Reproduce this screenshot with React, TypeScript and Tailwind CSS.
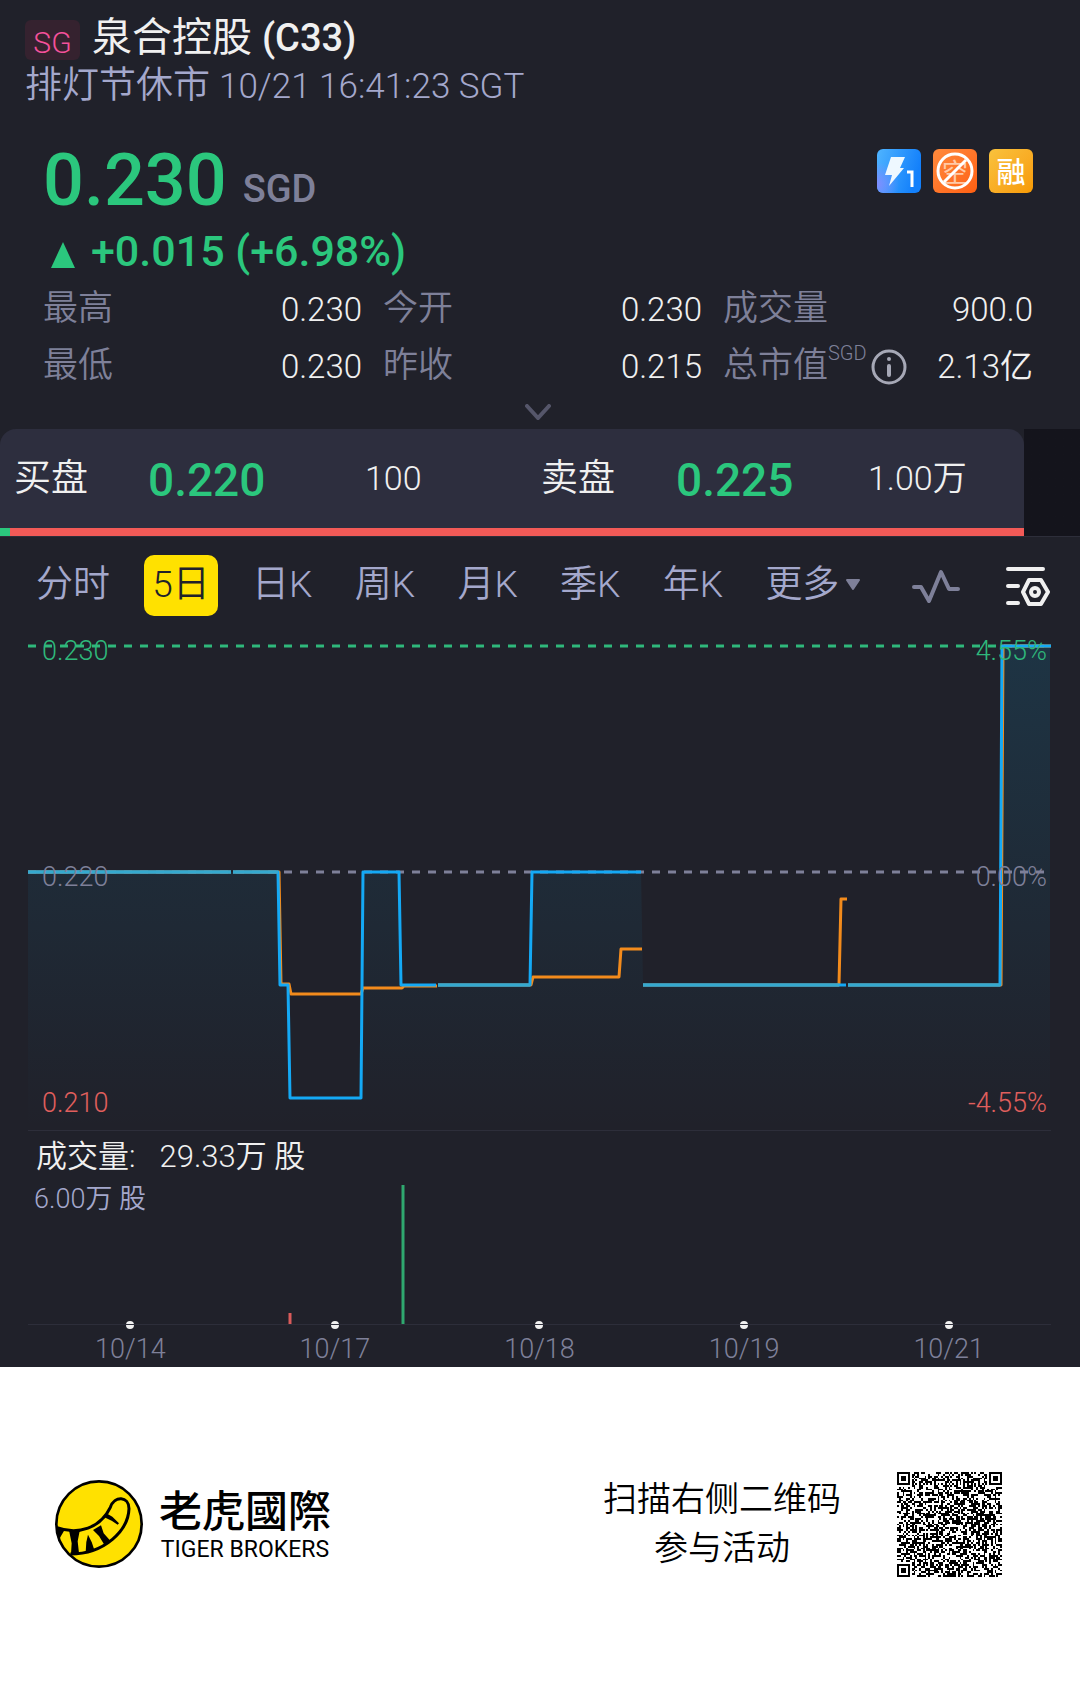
import React from 'react';

const sans = "font-['Roboto','Noto_Sans_CJK_SC',sans-serif]";

const stats = [
  { label: '最高', value: '0.230' },
  { label: '今开', value: '0.230' },
  { label: '成交量', value: '900.0' },
  { label: '最低', value: '0.230' },
  { label: '昨收', value: '0.215' },
  { label: '总市值', value: '2.13亿', unit: 'SGD', info: true },
];

const tabs = ['分时', '5日', '日K', '周K', '月K', '季K', '年K'];

const dates = ['10/14', '10/17', '10/18', '10/19', '10/21'];

// Chart coordinates: x 0-1023, y 0 = 0.230, 226 = 0.220, 452 = 0.210
const pricePaths = [
  'M0 226H203',
  'M205 226H250L252 339H260L262 452H333L335 226H371L373 339H408',
  'M410 339H502L504 226H613',
  'M615 339H818',
  'M820 339H972L974 0H1023',
];

const averagePaths = [
  'M0 226H203',
  'M205 226H251L253 338H261L263 348H333L335 342H374L376 340H409',
  'M410 339H503L505 331H591L593 303H614',
  'M615 339H811L813 253H819',
  'M820 339H973L975 0H1023',
];

const areaPath =
  'M0 226H250L252 339H260L262 452H333L335 226H371L373 339H502L504 226H613L615 339H972L974 0H1022V484H0Z';

const QR_SIZE = 57;

const isFinder = (x: number, y: number) => (x < 8 && y < 8) || (x > QR_SIZE - 9 && y < 8) || (x < 8 && y > QR_SIZE - 9);

const buildQr = () => {
  let d = '';
  let seed = 20221;
  const dot = (x: number, y: number, w = 1, h = 1) => {
    d += `M${x} ${y}h${w}v${h}h${-w}z`;
  };
  for (let y = 0; y < QR_SIZE; y++) {
    for (let x = 0; x < QR_SIZE; x++) {
      seed = (seed * 1103515245 + 12345) % 2147483648;
      if (isFinder(x, y)) continue;
      if (x === 6 || y === 6) {
        if ((x + y) % 2 === 0) dot(x, y);
        continue;
      }
      if ((seed >> 12) % 100 < 52) dot(x, y);
    }
  }
  [
    [0, 0],
    [QR_SIZE - 7, 0],
    [0, QR_SIZE - 7],
  ].forEach(([x, y]) => {
    dot(x, y, 7, 1);
    dot(x, y + 6, 7, 1);
    dot(x, y + 1, 1, 5);
    dot(x + 6, y + 1, 1, 5);
    dot(x + 2, y + 2, 3, 3);
  });
  return d;
};

const qrPath = buildQr();

const QrCode = () => (
  <svg viewBox="0 0 57 57" className="h-[105px] w-[105px]" role="img" aria-label="二维码">
    <path d={qrPath} fill="#000" shapeRendering="crispEdges" />
  </svg>
);

const TigerLogo = () => (
  <svg viewBox="0 0 264 264" className="h-22 w-22" aria-hidden="true">
    <circle cx="132" cy="132" r="128" fill="#ffe100" stroke="#000" strokeWidth="8" />
    <path
      d="M6 143C70 166 136 144 166 82C178 46 222 48 222 86C220 150 150 222 46 222"
      fill="none"
      stroke="#000"
      strokeWidth="9"
    />
    <path d="M5 140L30 148L18 168L10 184Z" />
    <path d="M42 151L74 153L68 184L72 220L48 222L50 190Z" />
    <path d="M99 164L110 186L118 210L92 218L94 186Z" />
    <path d="M114 150L138 136L146 160L166 182L148 194L132 168Z" />
    <path d="M148 112L158 102L172 110L192 130L188 134L170 122Z" />
  </svg>
);

const Badges = () => (
  <div className="flex gap-3">
    <svg viewBox="0 0 44 44" className="h-11 w-11" role="img" aria-label="1">
      <defs>
        <linearGradient id="blue" x1="0" y1="0" x2="1" y2="0.3">
          <stop offset="0" stopColor="#4fb4ff" />
          <stop offset="1" stopColor="#1380fb" />
        </linearGradient>
        <radialGradient id="violet" cx="0" cy="0.8" r="0.5">
          <stop offset="0" stopColor="#7f8dff" />
          <stop offset="1" stopColor="#7f8dff" stopOpacity="0" />
        </radialGradient>
      </defs>
      <rect width="44" height="44" rx="6" fill="url(#blue)" />
      <rect width="44" height="44" rx="6" fill="url(#violet)" />
      <path d="M14 8H28L23 19H27L12 37L15 26H8Z" fill="#eef8ff" />
      <path d="M30 23H35V38" fill="none" stroke="#fff" strokeWidth="3" />
    </svg>
    <div className="relative flex h-11 w-11 items-center justify-center rounded-md bg-linear-to-br from-[#ff8a3c] to-[#ff5f10] pt-1">
      <span className="text-[26px] leading-none text-[#ffc9a6]">空</span>
      <svg viewBox="0 0 44 44" className="absolute inset-0 h-full w-full" aria-hidden="true">
        <circle cx="22" cy="22" r="17" fill="none" stroke="#fff" strokeWidth="3" />
        <path d="M11 33L33 11" stroke="#fff" strokeWidth="3" />
      </svg>
    </div>
    <div className="flex h-11 w-11 items-center justify-center rounded-md bg-linear-to-br from-[#f9c23c] to-[#f79a00] pt-1 text-[29px] leading-none font-medium text-white">
      融
    </div>
  </div>
);

const InfoIcon = () => (
  <svg viewBox="0 0 36 36" className="h-9 w-9" aria-hidden="true">
    <circle cx="18" cy="18" r="16" fill="none" stroke="#a6a8b6" strokeWidth="3" />
    <circle cx="18" cy="10" r="2" fill="#a6a8b6" />
    <path d="M18 17V26" stroke="#a6a8b6" strokeWidth="4" strokeLinecap="round" />
  </svg>
);

const Header = () => (
  <header className="flex flex-col px-[25px] pt-[14px]">
    <div className="flex items-center gap-3">
      <span className="mt-1 flex h-10 w-[55px] items-center justify-center rounded-md bg-[#35222f] pt-1 text-[30px] font-light text-[#f4519b]">
        SG
      </span>
      <h1 className="text-[40px] leading-12 text-[#f0f0f0]">
        泉合控股 <span className="text-[38px] font-medium">(C33)</span>
      </h1>
    </div>
    <p className="text-[37px] leading-12 font-[350] text-[#a4a8cc]">
      排灯节休市 <span className="text-[35px]">10/21 16:41:23 SGT</span>
    </p>
  </header>
);

const Quote = () => (
  <section className="flex flex-col pt-[30px] pr-[47px] pl-[43px]">
    <div className="flex items-start justify-between">
      <div className="flex items-end gap-4 text-[#2bc77d]">
        <span className="text-[72px] leading-20 font-medium">0.230</span>
        <span className="text-[38px] leading-16 font-medium text-[#7e8099]">SGD</span>
      </div>
      <div className="pt-2">
        <Badges />
      </div>
    </div>
    <div className="flex items-center gap-4 pt-0.5 pl-2 text-[#2bc77d]">
      <svg viewBox="0 0 24 26" className="mt-2 h-[26px] w-6" aria-hidden="true">
        <path d="M12 0L24 26H0Z" fill="currentColor" />
      </svg>
      <span className="text-[43px] leading-14 font-medium">+0.015 (+6.98%)</span>
    </div>
    <dl className="mt-0.5 grid grid-cols-[319fr_319fr_310fr] gap-x-[21px]">
      {stats.map((item) => (
        <div key={item.label} className="flex h-[57px] items-center justify-between">
          <dt className="flex items-center text-[35px] font-[350] text-[#7e8099]">
            {item.label}
            {item.unit && <span className="mb-7 text-[20px] leading-5">{item.unit}</span>}
            {item.info && (
              <button type="button" aria-label="总市值说明" className="ml-1">
                <InfoIcon />
              </button>
            )}
          </dt>
          <dd className="text-[33px] font-[350] text-[#f0f0f0]">{item.value}</dd>
        </div>
      ))}
    </dl>
    <button type="button" aria-label="展开" className="flex h-[34px] items-center justify-center">
      <svg viewBox="0 0 26 16" className="h-4 w-[26px]" aria-hidden="true">
        <path d="M2 2L13 14L24 2" fill="none" stroke="#55566a" strokeWidth="4" strokeLinecap="round" />
      </svg>
    </button>
  </section>
);

const OrderBook = () => (
  <section className="border-b border-[#2d2e3a] bg-linear-to-r from-[#20212a] from-50% to-[#14141c] to-50%">
    <div className="mr-14 bg-[#20212a]">
      <div className="overflow-hidden rounded-t-2xl bg-[#2d2e3e]">
        <div className="grid h-[99px] grid-cols-[134fr_217fr_176fr_135fr_192fr_156fr] items-center pl-[14px] text-[37px] font-[350] text-[#f0f0f0]">
          <span>买盘</span>
          <span className="pt-1 text-[46px] font-medium text-[#2bc77d]">0.220</span>
          <span className="text-[34px]">100</span>
          <span>卖盘</span>
          <span className="pt-1 text-[46px] font-medium text-[#2bc77d]">0.225</span>
          <span className="text-[34px]">1.00万</span>
        </div>
        <div className="flex h-2">
          <div className="w-[1%] bg-[#2bc77d]" />
          <div className="flex-1 bg-[#f25a57]" />
        </div>
      </div>
    </div>
  </section>
);

const Periods = () => (
  <nav className="flex h-[98px] items-center justify-between pr-[30px] pb-0.5 pl-7 text-[37px] font-[350] text-[#a4a8cc]">
    {tabs.map((tab) => (
      <button
        key={tab}
        type="button"
        className={
          tab === '5日'
            ? 'h-[61px] rounded-[10px] bg-[#ffe100] px-2 text-[#20212a]'
            : 'h-[61px] px-2'
        }
      >
        {tab}
      </button>
    ))}
    <button type="button" className="flex items-center gap-1.5 px-2">
      更多
      <svg viewBox="0 0 16 12" className="h-3 w-4" aria-hidden="true">
        <path d="M2 1H14L8 10Z" fill="#7e8099" stroke="#7e8099" strokeWidth="2" strokeLinejoin="round" />
      </svg>
    </button>
    <button type="button" aria-label="指标" className="ml-4 pt-0.5">
      <svg viewBox="0 0 48 34" className="h-[34px] w-12" aria-hidden="true">
        <path
          d="M2 18H9L17 32L29 3L37 20H46"
          fill="none"
          stroke="#7e8099"
          strokeWidth="4"
          strokeLinecap="round"
          strokeLinejoin="round"
        />
      </svg>
    </button>
    <button type="button" aria-label="设置" className="ml-5 pt-0.5">
      <svg viewBox="0 0 44 40" className="h-10 w-11" fill="none" stroke="#f0f0f0" strokeWidth="4" aria-hidden="true">
        <path d="M2 3H37M2 20H12M2 37H12" strokeLinecap="round" />
        <path d="M23 14H35L42 26L35 38H23L17 26Z" strokeLinejoin="round" />
        <circle cx="29" cy="26" r="4" />
      </svg>
    </button>
  </nav>
);

const PriceChart = () => (
  <div className="relative h-[496px] border-b border-[#2d2e3a] pt-[11px] text-[27px] leading-8 font-[350]">
    <svg viewBox="0 0 1023 484" preserveAspectRatio="none" className="h-[484px] w-full overflow-visible" aria-hidden="true">
      <defs>
        <linearGradient id="area" gradientUnits="userSpaceOnUse" x1="0" y1="0" x2="0" y2="484">
          <stop offset="0" stopColor="#10a0d8" stopOpacity="0.15" />
          <stop offset="1" stopColor="#10a0d8" stopOpacity="0" />
        </linearGradient>
      </defs>
      <path d={areaPath} fill="url(#area)" />
      <g fill="none" strokeWidth="3">
        <path d="M0 0H1023" stroke="#2fb87b" strokeDasharray="8 8" />
        <path d="M0 226H1023" stroke="#7e8099" strokeDasharray="8 8" />
        {averagePaths.map((d) => (
          <path key={d} d={d} stroke="#f38b1c" strokeLinejoin="round" />
        ))}
        {pricePaths.map((d) => (
          <path key={d} d={d} stroke="#14a9f5" strokeLinejoin="round" />
        ))}
        <path d="M0 226H203M205 226H250M410 339H502M615 339H811M820 339H972" stroke="#35a9cf" />
      </g>
    </svg>
    <div className="absolute inset-x-0 top-0 flex justify-between pr-1 pl-[14px] text-[#2fb87b]">
      <span>0.230</span>
      <span>4.55%</span>
    </div>
    <div className="absolute inset-x-0 top-[226px] flex justify-between pr-1 pl-[14px] text-[#7e8099]">
      <span>0.220</span>
      <span>0.00%</span>
    </div>
    <div className="absolute inset-x-0 top-[452px] flex justify-between pr-1 pl-[14px] text-[#e05f5d]">
      <span>0.210</span>
      <span>-4.55%</span>
    </div>
  </div>
);

const VolumeChart = () => (
  <div>
    <div className="relative h-[194px] border-b border-[#2d2e3a] pt-2">
      <p className="flex gap-6 pl-2 text-[31px] leading-9 font-[350] text-[#f0f0f0]">
        <span>成交量:</span>
        <span>29.33万 股</span>
      </p>
      <p className="mt-1 pl-1.5 text-[27px] leading-10 font-[350] text-[#a4a8cc]">6.00万 股</p>
      <svg
        viewBox="0 0 1023 139"
        preserveAspectRatio="none"
        className="absolute inset-x-0 bottom-0 h-[139px] w-full"
        aria-hidden="true"
      >
        <path d="M262 128V139" stroke="#d95b5a" strokeWidth="3" />
        <path d="M375 0V139" stroke="#2fa86f" strokeWidth="3" />
      </svg>
    </div>
    <ol className="grid grid-cols-5 text-[27px] leading-8 font-[350] text-[#7e8099]">
      {dates.map((date) => (
        <li key={date} className="flex flex-col items-center gap-1">
          <span className="-mt-1 h-2 w-2 rounded-full bg-[#f0f0f0]" />
          {date}
        </li>
      ))}
    </ol>
  </div>
);

const Footer = () => (
  <footer className="flex h-[316px] items-center justify-between bg-white pr-[78px] pb-0.5 pl-[55px] text-black">
    <div className="flex items-center gap-4">
      <TigerLogo />
      <div className="flex flex-col items-center">
        <span className="font-['Noto_Sans_CJK_TC',sans-serif] text-[43px] leading-12 font-medium">老虎國際</span>
        <span className="pt-1 text-[23px] leading-7">TIGER BROKERS</span>
      </div>
    </div>
    <div className="flex items-center gap-14">
      <p className="text-center text-[34px] leading-[49px] font-[350]">
        扫描右侧二维码
        <br />
        参与活动
      </p>
      <QrCode />
    </div>
  </footer>
);

const App = () => {
  return (
    <div className={`min-h-screen bg-white ${sans}`}>
      <main className="bg-[#20212a] pb-0.5">
        <Header />
        <Quote />
        <OrderBook />
        <Periods />
        <div className="pr-[29px] pl-7">
          <PriceChart />
          <VolumeChart />
        </div>
      </main>
      <Footer />
    </div>
  );
};

export default App;
